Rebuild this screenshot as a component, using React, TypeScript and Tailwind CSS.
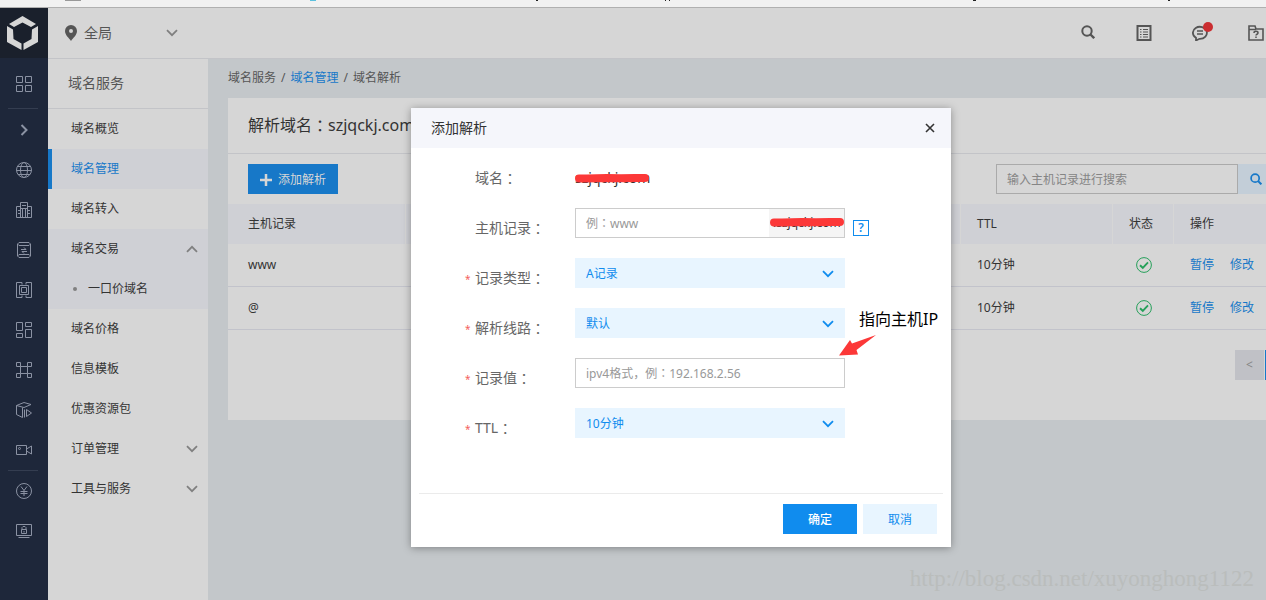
import type { ReactNode } from 'react';

const railTop = ['chevron', 'globe', 'city', 'database', 'chip', 'blocks', 'command', 'cube', 'camera'];
const railBottom = ['yen', 'lock'];

const railIcons: Record<string, ReactNode> = {
    grid: <path d="M.5.5h6v6h-6zM9.5.5h6v6h-6zM.5 9.5h6v6h-6zM9.5 9.5h6v6h-6z" />,
    chevron: <path d="M5.5 3l5 5-5 5" strokeWidth="2" />,
    globe: (
        <>
            <circle cx="8" cy="8" r="7.5" />
            <ellipse cx="8" cy="8" rx="3.5" ry="7.5" />
            <path d="M1.5 4.5h13M.5 8.5h15M2 12.5h12" />
        </>
    ),
    city: <path d="M.5 15.5v-11h4v11M4.5 15.5V.5h7v15M11.5 4.5h4v11H.5M6.5 6.5v9M9.5 6.5v9M4.5 6.5h7M6 3.5h4M2 8.5h2.5M2 11.5h2.5M11.5 8.5H14M11.5 11.5H14" />,
    database: (
        <>
            <path d="M3 .5h10l1.5 1.5L13 3.5H3L1.5 2zM1.5 2v12M14.5 2v12M3 12.5h10l1.5 1.5-1.5 1.5H3L1.5 14z" />
            <path d="M5 7.5h5L8 5.5M11 9.5H6l2 2" />
        </>
    ),
    chip: (
        <>
            <path d="M6 2.5v-2H.5v15H6v-2M10 2.5v-2h5.5v15H10v-2" />
            <path d="M3.5 3.5h9v9h-9zM5.5 5.5h5v5h-5z" />
        </>
    ),
    blocks: <path d="M.5.5h6v8h-6zM9.5.5h6v4h-6zM.5 11.5h6v4h-6zM9.5 7.5h6v8h-6z" />,
    command: <path d="M.5.5h4v4h-4zM11.5.5h4v4h-4zM.5 11.5h4v4h-4zM11.5 11.5h4v4h-4zM4.5 4.5h7v7h-7z" />,
    cube: <path d="M.5 3.5l7.5-3 7 2-7 3zM.5 3.5v9l6 3v-10M8.5 7.5v8M10.5 7.5v7l5-3.5z" />,
    camera: (
        <>
            <path d="M.5 3.5h10v9H.5zM10.5 7l5-3v8l-5-3" />
            <circle cx="3.5" cy="6.5" r="1" />
        </>
    ),
    yen: (
        <>
            <circle cx="8" cy="8" r="7.5" />
            <path d="M5 3.5l3 4 3-4M8 7.5V13M4.5 8.5h7M4.5 10.5h7" />
        </>
    ),
    lock: <path d="M.5 1.5h15v11H.5zM2.5 14.5h11M5.5 6.5h5v4h-5zM6 6.5v-2l1-1h2l1 1v2M8 8v1.5" />,
};

function RailItem({ name }: { name: string }) {
    return (
        <button type="button" aria-label={name} className="flex h-10 w-full items-center justify-center">
            <svg viewBox="0 0 16 16" className="size-4 fill-none stroke-[#8b92a3]">
                {railIcons[name]}
            </svg>
        </button>
    );
}

function Chevron({ className }: { className: string }) {
    return (
        <svg viewBox="0 0 12 8" className={`h-2 w-3 fill-none ${className}`}>
            <path d="M1 1.2L6 6.2l5-5" strokeWidth="1.8" />
        </svg>
    );
}

function Magnifier({ className }: { className: string }) {
    return (
        <svg viewBox="0 0 14 14" className={`fill-none ${className}`}>
            <circle cx="6" cy="6" r="4.7" strokeWidth="2" />
            <path d="M9.5 9.5l3.7 3.7" strokeWidth="2.4" />
        </svg>
    );
}

function Rail() {
    return (
        <nav className="w-12 shrink-0 bg-[#1e273a]">
            <div className="flex h-[50px] items-center justify-center bg-[#1a202c] pr-1">
                <svg viewBox="0 0 32 36" className="h-9 w-8 fill-[#d6d6d6]">
                    <path d="M16.5 1L30 9l-5 3-8.5-4.5L8 12 3 9z" />
                    <path d="M1 11l6 3.5.5 9.5 8 4.5V35L1 27zM32 11l-6 3.5-.5 9.5-8 4.5V35L32 27z" />
                </svg>
            </div>
            <div className="pt-1.5 pb-1">
                <RailItem name="grid" />
            </div>
            <hr className="mb-px ml-2 w-[30px] border-[#343d50]" />
            {railTop.map((name) => (
                <RailItem key={name} name={name} />
            ))}
            <hr className="ml-2 w-[30px] border-[#343d50]" />
            {railBottom.map((name) => (
                <RailItem key={name} name={name} />
            ))}
        </nav>
    );
}

function Header() {
    return (
        <header className="flex h-[51px] items-center border-b border-[#c3c4c8]">
            <button type="button" className="flex w-[160px] items-center pl-[17px] text-sm text-[#555]">
                <svg viewBox="0 0 12 16" className="mr-[7px] h-4 w-3 fill-[#555]">
                    <path fillRule="evenodd" d="M6 0a6 6 0 0 0-6 6c0 4 4 7 6 10 2-3 6-6 6-10a6 6 0 0 0-6-6zm0 4a2 2 0 1 1 0 4 2 2 0 0 1 0-4z" />
                </svg>
                全局
                <Chevron className="ml-auto mr-[30px] stroke-[#808080]" />
            </button>
            <div className="ml-auto flex gap-10 pr-0.5">
                <button type="button" aria-label="搜索" className="flex w-4 justify-center">
                    <Magnifier className="size-3.5 stroke-[#555]" />
                </button>
                <button type="button" aria-label="列表">
                    <svg viewBox="0 0 16 16" className="size-4 fill-none stroke-[#555]">
                        <path d="M1.5 1h13v14h-13z" strokeWidth="2" />
                        <path d="M4 4.5h1.5M7 4.5h5M4 7h1.5M7 7h5M4 9.5h1.5M7 9.5h5M4 12h1.5M7 12h5" strokeWidth="1.2" />
                    </svg>
                </button>
                <button type="button" aria-label="消息" className="relative">
                    <svg viewBox="0 0 16 16" className="size-4 fill-none stroke-[#555]">
                        <path d="M4 15.5v-2.7A7 6 0 1 1 7.5 13.8z" strokeWidth="1.8" />
                        <path d="M5 6h6M5 9h6" strokeWidth="1.5" />
                    </svg>
                    <span className="absolute -top-[3px] -right-[5px] size-2.5 rounded-full bg-[#cb2e31]" />
                </button>
                <button type="button" aria-label="帮助">
                    <svg viewBox="0 0 16 16" className="size-4 fill-none stroke-[#555]">
                        <path d="M1 1h6l1 3h7v11H1zM1 4.5h7" strokeWidth="1.6" />
                        <path d="M6 8c0-2.2 4-2.2 4 0 0 1.2-2 1.3-2 2.5M8 11.5V13" strokeWidth="1.5" />
                    </svg>
                </button>
            </div>
        </header>
    );
}

function MenuItem({ label, active, arrow }: { label: string; active?: boolean; arrow?: 'up' | 'down' }) {
    return (
        <a
            href="#"
            className={`flex h-10 items-center pr-2.5 ${active ? 'border-l-4 border-[#1778c8] bg-[#cfd0d5] pl-[19px] text-[#1778c8]' : 'pl-[23px]'}`}
        >
            {label}
            {arrow && <Chevron className={`ml-auto stroke-[#808080] ${arrow === 'up' ? 'rotate-180' : ''}`} />}
        </a>
    );
}

function Sidebar() {
    return (
        <aside className="w-[160px] shrink-0 bg-[#d6d6d6] text-xs text-[#333]">
            <h2 className="flex h-[50px] items-center border-b border-[#c3c4c8] pb-0.5 pl-5 text-sm text-[#555]">域名服务</h2>
            <MenuItem label="域名概览" />
            <MenuItem label="域名管理" active />
            <MenuItem label="域名转入" />
            <div className="bg-[#cfd0d5]">
                <MenuItem label="域名交易" arrow="up" />
                <a href="#" className="flex h-10 items-center pl-[25px]">
                    <span className="mr-[11px] size-1 rounded-full bg-[#808080]" />
                    一口价域名
                </a>
            </div>
            <MenuItem label="域名价格" />
            <MenuItem label="信息模板" />
            <MenuItem label="优惠资源包" />
            <MenuItem label="订单管理" arrow="down" />
            <MenuItem label="工具与服务" arrow="down" />
        </aside>
    );
}

function RecordTable() {
    return (
        <table className="w-full table-fixed border-separate border-spacing-0 text-left text-xs text-[#333]">
            <colgroup>
                <col className="w-[178px]" />
                <col />
                <col className="w-[152px]" />
                <col className="w-[61px]" />
                <col className="w-[92px]" />
            </colgroup>
            <thead className="bg-[#cfd0d5]">
                <tr className="h-10">
                    <th className="border-r border-[#d6d6d6] pl-5 font-normal">主机记录</th>
                    <td className="border-r border-[#d6d6d6]" />
                    <th className="border-r border-[#d6d6d6] pl-4 font-normal">TTL</th>
                    <th className="border-r border-[#d6d6d6] pr-1 text-center font-normal">状态</th>
                    <th className="pl-4 font-normal">操作</th>
                </tr>
            </thead>
            <tbody>
                {['www', '@'].map((host) => (
                    <tr key={host} className="h-[43px] *:border-b *:border-[#c2c3cb]">
                        <td className="pl-5">{host}</td>
                        <td />
                        <td className="pl-4">10分钟</td>
                        <td>
                            <svg viewBox="0 0 16 16" className="mx-auto size-4 fill-none stroke-[#26a05a]">
                                <circle cx="8" cy="8" r="7.4" />
                                <path d="M4 8.2l2.8 2.6L12 5.4" strokeWidth="1.9" />
                            </svg>
                        </td>
                        <td className="pl-4 text-[#1778c8]">
                            <a href="#" className="mr-4">暂停</a>
                            <a href="#">修改</a>
                        </td>
                    </tr>
                ))}
            </tbody>
        </table>
    );
}

function Content() {
    return (
        <main className="min-w-0 flex-1 overflow-hidden bg-[#c3c7ca] pl-5">
            <nav className="flex h-[39px] items-center gap-[5px] pb-0.5 text-xs text-[#555]">
                <a href="#">域名服务</a>/
                <a href="#" className="text-[#1778c8]">域名管理</a>/
                <span>域名解析</span>
            </nav>
            <section className="bg-[#d6d6d6] pb-10">
                <h1 className="flex h-14 items-center border-b border-[#c3c4c8] pb-0.5 pl-5 text-base text-[#333]">
                    解析域名<span className="font-['Noto_Sans_CJK_JP']">：</span>szjqckj.com
                </h1>
                <div className="flex h-[50px] items-center justify-between pl-5 text-xs">
                    <button type="button" className="flex h-[30px] w-[90px] items-center justify-center gap-1.5 bg-[#1778c8] pt-0.5 text-[#d6d6d6]">
                        <svg viewBox="0 0 12 12" className="size-3 fill-none stroke-[#d6d6d6]">
                            <path d="M6 0v12M0 6h12" strokeWidth="2.5" />
                        </svg>
                        添加解析
                    </button>
                    <div className="flex">
                        <input
                            aria-label="搜索主机记录"
                            placeholder="输入主机记录进行搜索"
                            className="h-[30px] w-[242px] border border-[#aaa] px-2.5 placeholder:text-[#858585]"
                        />
                        <button type="button" aria-label="搜索" className="flex h-[30px] w-7 items-center bg-[#c3ced8] pl-3">
                            <Magnifier className="size-3 stroke-[#1778c8]" />
                        </button>
                    </div>
                </div>
                <RecordTable />
                <div className="mt-5 flex justify-end gap-px text-xs">
                    <button type="button" className="h-[30px] w-[29px] bg-[#c0c1c6] text-[#858585]">&lt;</button>
                    <span className="w-px bg-[#1778c8]" />
                </div>
            </section>
        </main>
    );
}

function FormRow({ id, label, required, children }: { id: string; label: string; required?: boolean; children: ReactNode }) {
    return (
        <div className="flex h-[50px]">
            <label htmlFor={id} className="flex h-10 w-[164px] shrink-0 items-center pl-[54px] text-sm text-[#666]">
                <span className="w-2.5 pt-0.5 text-[10px] text-[#f4615c]">{required && '*'}</span>
                {label}
                <span className="font-['Noto_Sans_CJK_JP']">：</span>
            </label>
            {children}
        </div>
    );
}

function SelectBox({ id, value }: { id: string; value: string }) {
    return (
        <div className="relative h-[30px] w-[270px]">
            <select id={id} className="h-full w-full appearance-none bg-[#e8f5ff] pt-0.5 pl-[11px] text-xs text-[#108cee]">
                <option>{value}</option>
            </select>
            <Chevron className="pointer-events-none absolute top-3 right-[11px] stroke-[#108cee]" />
        </div>
    );
}

function Scribble({ className }: { className: string }) {
    return (
        <svg viewBox="0 0 76 10" className={`absolute h-2.5 w-[76px] fill-none stroke-[#fc3838] ${className}`}>
            <path d="M5 5.5h8l20-.5 14 .3 14-.3h10" strokeWidth="8" strokeLinecap="round" strokeLinejoin="round" />
        </svg>
    );
}

function AddRecordDialog() {
    return (
        <div role="dialog" aria-label="添加解析" className="absolute top-[108px] left-[411px] w-[540px] bg-white shadow-[0_1px_8px_rgba(0,0,0,0.35)]">
            <div className="flex h-10 items-center justify-between bg-[#f5f6fb] pr-4 pl-5 text-sm text-[#333]">
                <h3>添加解析</h3>
                <button type="button" aria-label="关闭">
                    <svg viewBox="0 0 10 10" className="size-2.5 fill-none stroke-[#333]">
                        <path d="M1 1l8 8M9 1L1 9" strokeWidth="1.6" />
                    </svg>
                </button>
            </div>
            <form className="pt-2.5 pb-[35px]">
                <FormRow id="domain" label="域名">
                    <output id="domain" className="relative flex h-10 items-center text-sm text-[#333]">
                        szjqckj.com
                        <Scribble className="top-[15px] -left-px" />
                    </output>
                </FormRow>
                <FormRow id="host" label="主机记录">
                    <div className="relative flex h-[30px] w-[270px] border border-[#ccc] text-xs">
                        <input id="host" placeholder="例：www" className="min-w-0 flex-1 px-2.5 pt-0.5 font-['Noto_Sans','Noto_Sans_CJK_JP'] placeholder:text-[#999]" />
                        <span className="flex w-[75px] items-center bg-[#f5f5f5] pl-1 text-[#333]">.szjqckj.com</span>
                        <Scribble className="top-2 -right-px" />
                    </div>
                    <button type="button" aria-label="帮助" className="mt-3 ml-2 flex size-4 items-center justify-center border border-[#108cee] text-xs font-semibold text-[#108cee]">
                        ?
                    </button>
                </FormRow>
                <FormRow id="type" label="记录类型" required>
                    <SelectBox id="type" value="A记录" />
                </FormRow>
                <FormRow id="line" label="解析线路" required>
                    <SelectBox id="line" value="默认" />
                </FormRow>
                <FormRow id="value" label="记录值" required>
                    <input
                        id="value"
                        placeholder="ipv4格式，例：192.168.2.56"
                        className="h-[30px] w-[270px] border border-[#ccc] px-2.5 font-['Noto_Sans','Noto_Sans_CJK_JP'] text-xs placeholder:text-[#999]"
                    />
                </FormRow>
                <FormRow id="ttl" label="TTL" required>
                    <SelectBox id="ttl" value="10分钟" />
                </FormRow>
            </form>
            <div className="mx-2 flex justify-end gap-1.5 border-t border-[#ebebeb] px-1.5 pt-2.5 pb-[13px] text-xs">
                <button type="button" className="h-[30px] w-[74px] bg-[#108cee] pt-0.5 font-medium text-white">确定</button>
                <button type="button" className="h-[30px] w-[74px] bg-[#e8f5ff] pt-0.5 text-[#108cee]">取消</button>
            </div>

            {/* hint pointing at the record value field */}
            <p className="absolute top-[199px] left-[448px] text-base whitespace-nowrap text-black">指向主机IP</p>
            <svg viewBox="0 0 38 21" className="absolute top-[227px] left-[428px] h-[21px] w-[38px] fill-[#fc3838]">
                <path d="M0 20.5L11 5l2 3.5L37 0 17.5 15l1.5 4.500z" />
            </svg>
        </div>
    );
}

export default function App() {
    return (
        <div className="relative flex min-h-screen flex-col overflow-hidden bg-[#d6d6d6] font-['Noto_Sans','Noto_Sans_CJK_SC',sans-serif]">
            <div className="h-2 border-b border-[#b0b0b0] bg-[#f1f1f1]">
                <svg className="block h-[7px] w-full">
                    <path d="M65 0h16v1H65z" fill="#999" />
                    <path d="M310 0h6v1h-6z" fill="#5bc0de" />
                    <path d="M536 0h2v1h-2zM665 0h1v1h-1zM669 0h1v1h-1zM973 0h3v1h-3zM1168 0h2v1h-2z" fill="#222" />
                </svg>
            </div>
            <div className="flex flex-1">
                <Rail />
                <div className="flex min-w-0 flex-1 flex-col">
                    <Header />
                    <div className="flex flex-1">
                        <Sidebar />
                        <Content />
                    </div>
                </div>
            </div>
            <AddRecordDialog />
            <p className="absolute right-3 bottom-1 font-['Liberation_Serif',serif] text-[23px] text-[#babdbc]">
                http://blog.csdn.net/xuyonghong1122
            </p>
        </div>
    );
}
